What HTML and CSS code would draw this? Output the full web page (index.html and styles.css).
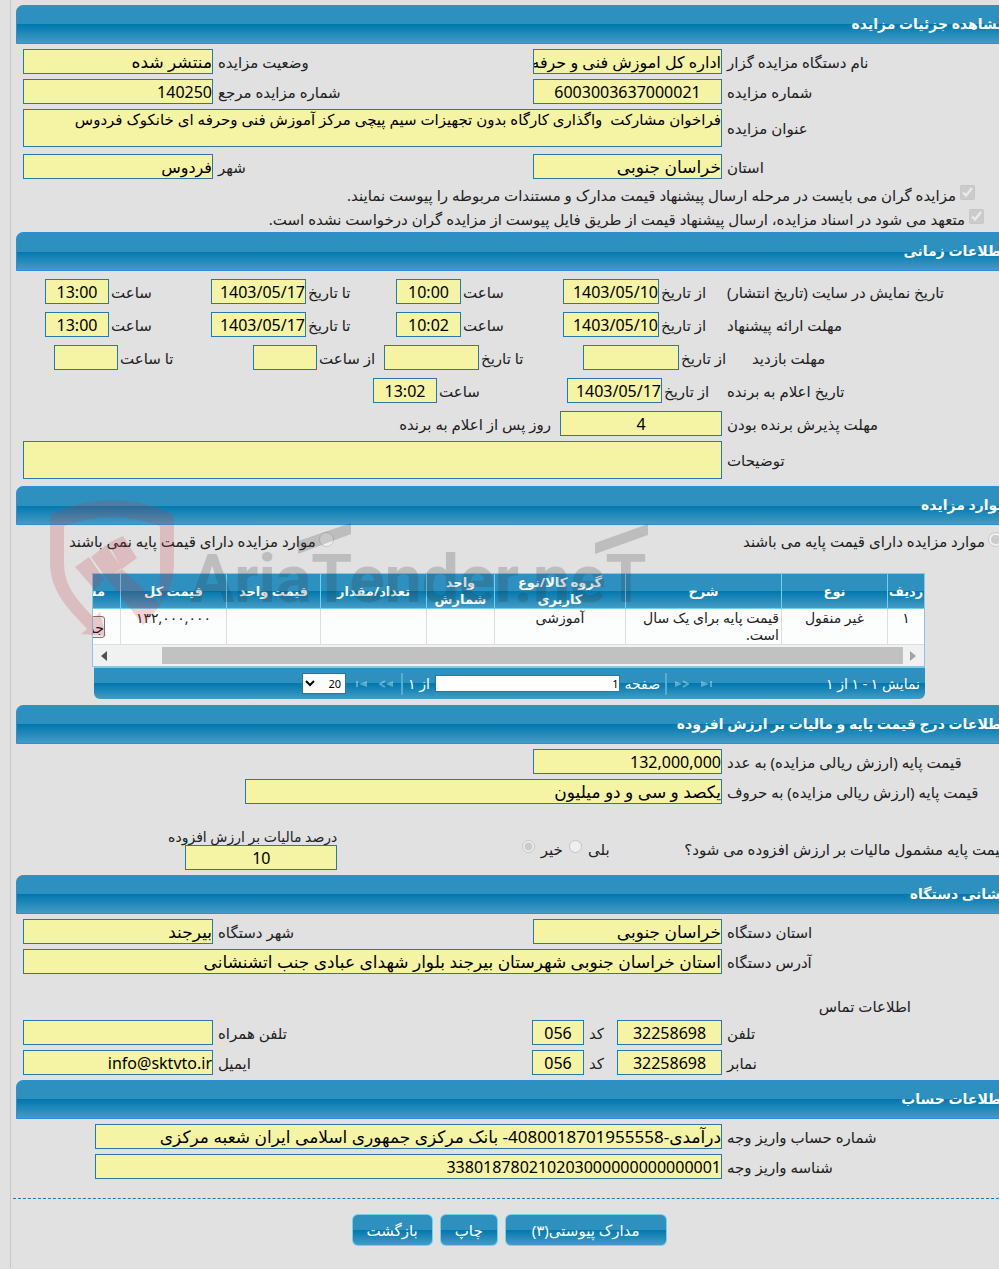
FILE: index.html
```
<!DOCTYPE html>
<html lang="fa" dir="rtl">
<head>
  <meta charset="UTF-8" />
  <meta name="viewport" content="width=device-width, initial-scale=1.0" />
  <title>مشاهده جزئیات مزایده</title>
  <link rel="stylesheet" href="styles.css">
</head>
<body>
  <main class="page">
    <h2 class="bar">مشاهده جزئیات مزایده</h2>
    <section class="section general">
      <div class="row two">
        <label for="org">نام دستگاه مزایده گزار</label>
        <input type="text" id="org" value="اداره کل اموزش فنی و حرفه ای" readonly>
        <label for="status">وضعیت مزایده</label>
        <input type="text" id="status" class="fa" value="منتشر شده" readonly>
      </div>
      <div class="row two">
        <label for="num">شماره مزایده</label>
        <input type="text" id="num" class="center" value="6003003637000021" readonly>
        <label for="ref">شماره مزایده مرجع</label>
        <input type="text" id="ref" value="140250" readonly>
      </div>
      <div class="row wide">
        <label for="subject">عنوان مزایده</label>
        <textarea id="subject" readonly>فراخوان مشارکت  واگذاری کارگاه بدون تجهیزات سیم پیچی مرکز آموزش فنی وحرفه ای خانکوک فردوس</textarea>
      </div>
      <div class="row two province">
        <label for="province">استان</label>
        <input type="text" id="province" class="fa" value="خراسان جنوبی" readonly>
        <label for="city">شهر</label>
        <input type="text" id="city" value="فردوس" readonly>
      </div>
      <div class="checks">
        <label class="check first"><input type="checkbox" checked disabled> مزایده گران می بایست در مرحله ارسال پیشنهاد قیمت مدارک و مستندات مربوطه را پیوست نمایند.</label>
        <label class="check"><input type="checkbox" checked disabled> متعهد می شود در اسناد مزایده، ارسال پیشنهاد قیمت از طریق فایل پیوست از مزایده گران درخواست نشده است.</label>
      </div>
    </section>

    <h2 class="bar">اطلاعات زمانی</h2>
    <section class="section times">
      <div class="row time">
        <span>تاریخ نمایش در سایت (تاریخ انتشار)</span>
        <label for="d1">از تاریخ</label>
        <input type="text" id="d1" value="1403/05/10" readonly>
        <label for="h1">ساعت</label>
        <input type="text" id="h1" class="center" value="10:00" readonly>
        <label for="d2">تا تاریخ</label>
        <input type="text" id="d2" value="1403/05/17" readonly>
        <label for="h2">ساعت</label>
        <input type="text" id="h2" class="center" value="13:00" readonly>
      </div>
      <div class="row time">
        <span>مهلت ارائه پیشنهاد</span>
        <label for="d3">از تاریخ</label>
        <input type="text" id="d3" value="1403/05/10" readonly>
        <label for="h3">ساعت</label>
        <input type="text" id="h3" class="center" value="10:02" readonly>
        <label for="d4">تا تاریخ</label>
        <input type="text" id="d4" value="1403/05/17" readonly>
        <label for="h4">ساعت</label>
        <input type="text" id="h4" class="center" value="13:00" readonly>
      </div>
      <div class="row visit">
        <span>مهلت بازدید</span>
        <label for="d5">از تاریخ</label>
        <input type="text" id="d5" readonly>
        <label for="d6">تا تاریخ</label>
        <input type="text" id="d6" readonly>
        <label for="h5">از ساعت</label>
        <input type="text" id="h5" readonly>
        <label for="h6">تا ساعت</label>
        <input type="text" id="h6" readonly>
      </div>
      <div class="row winner">
        <span>تاریخ اعلام به برنده</span>
        <label for="d7">از تاریخ</label>
        <input type="text" id="d7" value="1403/05/17" readonly>
        <label for="h7">ساعت</label>
        <input type="text" id="h7" class="center" value="13:02" readonly>
      </div>
      <div class="row accept">
        <label for="days">مهلت پذیرش برنده بودن</label>
        <input type="text" id="days" class="center" value="4" readonly>
        <span class="after">روز پس از اعلام به برنده</span>
      </div>
      <div class="row wide">
        <label for="notes">توضیحات</label>
        <textarea id="notes" readonly></textarea>
      </div>
    </section>

    <h2 class="bar">موارد مزایده</h2>
    <section class="section items">
      <div class="base-price">
        <label><input type="radio" name="base" checked disabled> موارد مزایده دارای قیمت پایه می باشند</label>
        <label><input type="radio" name="base" disabled> موارد مزایده دارای قیمت پایه نمی باشند</label>
      </div>

      <div class="grid">
        <div class="grid-view">
          <table>
            <colgroup>
              <col class="c-row"><col class="c-kind"><col class="c-desc"><col class="c-group"><col class="c-unit">
              <col class="c-qty"><col class="c-each"><col class="c-total"><col class="c-more">
            </colgroup>
            <thead>
              <tr>
                <th>ردیف</th>
                <th>نوع</th>
                <th>شرح</th>
                <th>گروه کالا/نوع<br>کاربری</th>
                <th>واحد شمارش</th>
                <th>تعداد/مقدار</th>
                <th>قیمت واحد</th>
                <th>قیمت کل</th>
                <th class="more-col">مشخصات</th>
              </tr>
            </thead>
            <tbody>
              <tr>
                <td>۱</td>
                <td>غیر منقول</td>
                <td class="desc">قیمت پایه برای یک سال است.</td>
                <td>آموزشی</td>
                <td></td>
                <td></td>
                <td></td>
                <td>۱۳۲,۰۰۰,۰۰۰</td>
                <td class="more-col"><button type="button" class="more">جزئیات</button></td>
              </tr>
            </tbody>
          </table>
          <div class="scroll">
            <svg class="off" width="6" height="10" viewBox="0 0 6 10"><path d="M0 0L6 5L0 10Z"/></svg>
            <div class="thumb"></div>
            <svg width="6" height="10" viewBox="0 0 6 10"><path d="M6 0L0 5L6 10Z"/></svg>
          </div>
        </div>
        <div class="pager">
          <span class="info">نمایش ۱ - ۱ از ۱</span>
          <div class="pager-nav">
            <button type="button" disabled aria-label="اولین"><svg width="12" height="8" viewBox="0 0 12 8"><path d="M0 1L8 4L0 7ZM9 1H11V7H9Z"/></svg></button>
            <button type="button" disabled aria-label="قبلی"><svg width="14" height="8" viewBox="0 0 14 8"><path d="M0 1L7 4L0 7Z"/><path class="line" d="M8 1L13 4L8 7"/></svg></button>
            <i></i>
            <label for="pg">صفحه</label>
            <input type="text" id="pg" value="1">
            <span>از ۱</span>
            <i></i>
            <button type="button" disabled aria-label="بعدی"><svg width="14" height="8" viewBox="0 0 14 8"><path d="M14 1L7 4L14 7Z"/><path class="line" d="M6 1L1 4L6 7"/></svg></button>
            <button type="button" disabled aria-label="آخرین"><svg width="12" height="8" viewBox="0 0 12 8"><path d="M12 1L4 4L12 7ZM1 1H3V7H1Z"/></svg></button>
            <select aria-label="تعداد در صفحه"><option>20</option></select>
          </div>
        </div>
      </div>

      <svg class="watermark" width="610" height="140" viewBox="0 0 610 140" direction="ltr">
        <g fill="#c8323c">
          <path d="M0 15Q62 -15 124 15V62C124 88 112 104 93 125L111 105C108 92 110 80 110 70V26Q62 8 14 26V62C14 88 28 100 44 118L50 112L56 136L31 134L37 129C18 108 0 92 0 62Z"/>
          <path d="M25 67L39 57L54 79L45 90ZM41 57L56 45L72 68L57 79ZM58 43L73 36L87 58L72 69Z"/>
          <path d="M57 79L72 69L111 105L93 125Z"/>
        </g>
        <g fill="#333">
          <path d="M248 41L301 23V34L248 54ZM545 43L598 24V35L545 54Z"/>
          <text x="140" y="102">AriaTender.neT</text>
        </g>
      </svg>
    </section>

    <h2 class="bar">اطلاعات درج قیمت پایه و مالیات بر ارزش افزوده</h2>
    <section class="section">
      <div class="row two">
        <label for="price">قیمت پایه (ارزش ریالی مزایده) به عدد</label>
        <input type="text" id="price" value="132,000,000" readonly>
      </div>
      <div class="row words">
        <label for="words">قیمت پایه (ارزش ریالی مزایده) به حروف</label>
        <input type="text" id="words" class="fa" value="یکصد و سی و دو میلیون" readonly>
      </div>
      <div class="vat">
        <span class="question">قیمت پایه مشمول مالیات بر ارزش افزوده می شود؟</span>
        <div class="answers">
          <label for="yes">بلی</label>
          <input type="radio" id="yes" name="vat" disabled>
          <label for="no">خیر</label>
          <input type="radio" id="no" name="vat" checked disabled>
        </div>
        <div class="percent">
          <label for="vat">درصد مالیات بر ارزش افزوده</label>
          <input type="text" id="vat" class="center" value="10" readonly>
        </div>
      </div>
    </section>

    <h2 class="bar">نشانی دستگاه</h2>
    <section class="section">
      <div class="row two">
        <label for="province2">استان دستگاه</label>
        <input type="text" id="province2" class="fa" value="خراسان جنوبی" readonly>
        <label for="city2">شهر دستگاه</label>
        <input type="text" id="city2" class="fa" value="بیرجند" readonly>
      </div>
      <div class="row wide">
        <label for="address">آدرس دستگاه</label>
        <input type="text" id="address" class="fa" value="استان خراسان جنوبی شهرستان بیرجند بلوار شهدای عبادی جنب اتشنشانی" readonly>
      </div>
      <h3 class="contact-title">اطلاعات تماس</h3>
      <div class="row contact">
        <label for="tel">تلفن</label>
        <input type="text" id="tel" class="center" value="32258698" readonly>
        <label for="telcode">کد</label>
        <input type="text" id="telcode" class="center" value="056" readonly>
        <label for="mobile">تلفن همراه</label>
        <input type="text" id="mobile" readonly>
      </div>
      <div class="row contact">
        <label for="fax">نمابر</label>
        <input type="text" id="fax" class="center" value="32258698" readonly>
        <label for="faxcode">کد</label>
        <input type="text" id="faxcode" class="center" value="056" readonly>
        <label for="email">ایمیل</label>
        <input type="text" id="email" value="info@sktvto.ir" readonly>
      </div>
    </section>

    <h2 class="bar">اطلاعات حساب</h2>
    <section class="section">
      <div class="row account">
        <label for="account">شماره حساب واریز وجه</label>
        <input type="text" id="account" class="fa" value="درآمدی-4080018701955558- بانک مرکزی جمهوری اسلامی ایران شعبه مرکزی" readonly>
      </div>
      <div class="row account">
        <label for="payid">شناسه واریز وجه</label>
        <input type="text" id="payid" value="338018780210203000000000000001" readonly>
      </div>
    </section>

    <div class="actions">
      <button type="button" class="docs">مدارک پیوستی(۳)</button>
      <button type="button">چاپ</button>
      <button type="button">بازگشت</button>
    </div>
  </main>
</body>
</html>
```
FILE: styles.css
```
:root {
  --bg: #e1e1e1;
  --field: #f5f3a4;
  --border: #2779aa;
  --bar: linear-gradient(#2e90bf 0, #2e90bf 50%, #0078ae 50%, #459bc5 100%);
}

* {
  box-sizing: border-box;
  margin: 0;
  padding: 0;
}

body {
  font-family: "Noto Sans", "DejaVu Sans", sans-serif;
  font-size: 15px;
  line-height: 18px;
  background: var(--bg);
  color: #222;
  overflow-x: hidden;
}

.page {
  margin-left: 10px;
  padding: 5px 0 22px 5px;
  border-left: 1px solid #c8c8c8;
}

.bar {
  height: 39px;
  line-height: 36px;
  margin-right: -8px;
  border: 1px solid #2a90dd;
  border-top-left-radius: 7px;
  background: var(--bar);
  color: #fff;
  font-size: 14px;
  font-weight: bold;
}

.section {
  display: flex;
  flex-direction: column;
  gap: 5px;
  padding: 5px 0 5px 7px;
}

.general {
  padding-bottom: 0;
}

.row {
  display: grid;
  gap: 5px;
  align-items: center;
}

.row label,
.row span {
  text-align: left;
  white-space: nowrap;
}

.two { grid-template-columns: 272fr 189px 310fr 190px; }
.wide { grid-template-columns: 272fr 699fr; }
.words { grid-template-columns: 272fr 477fr 217fr; }
.account { grid-template-columns: 272fr 627fr 67fr; }
.contact { grid-template-columns: 272fr 105px 23px 52px 309fr 190px; }
.time { grid-template-columns: 272fr 64fr 96px 98fr 65px 86fr 95px 98fr 64px 20fr; gap: 2px; }
.visit { grid-template-columns: 247fr 69fr 96px 100fr 95px 63fr 64px 131fr 64px 29fr; gap: 2px; }
.winner { grid-template-columns: 272fr 61fr 95px 126fr 64px 348fr; gap: 2px; }
.accept { grid-template-columns: 272fr 162px 532fr; }

.row .after {
  text-align: right;
  padding-right: 4px;
}

input[type="text"],
textarea {
  width: 100%;
  height: 25px;
  border: 1px solid var(--border);
  background: var(--field);
  color: #000;
  font-family: inherit;
  font-size: 16px;
  border-radius: 0;
  outline: none;
}

input.fa {
  font-size: 17px;
}

textarea {
  display: block;
  height: 38px;
  font-size: 15px;
  line-height: 18px;
  resize: none;
  overflow: hidden;
}

input.center {
  text-align: center;
}

.province {
  margin-top: 2px;
}

.checks {
  padding-right: 15px;
}

.check {
  display: flex;
  align-items: center;
  gap: 4px;
  height: 24px;
  padding-bottom: 2px;
  white-space: nowrap;
}

.check.first {
  padding-right: 9px;
}

input[type="checkbox"] {
  width: 15px;
  height: 15px;
  margin-bottom: 6px;
}

/* dates and hours */
.times {
  gap: 8px;
  padding-top: 8px;
  padding-bottom: 7px;
}

.accept {
  margin-bottom: -3px;
}

/* auction items */
.items {
  position: relative;
  gap: 21px;
  padding-bottom: 6px;
}

.base-price {
  display: flex;
  justify-content: space-between;
  margin: 0 -4px 0 46px;
}

.base-price label {
  display: flex;
  align-items: center;
  gap: 3px;
  height: 22px;
}

input[type="radio"] {
  width: 15px;
  height: 15px;
  margin-bottom: 4px;
}

.grid {
  margin: 0 74px 0 69px;
}

.grid-view {
  overflow: hidden;
  border: 1px solid #8cc5e3;
}

table {
  width: 900px;
  table-layout: fixed;
  border-collapse: separate;
  border-spacing: 0;
  font-size: 14px;
  line-height: 17px;
}

.c-row { width: 37px; }
.c-kind { width: 106px; }
.c-desc { width: 156px; }
.c-group { width: 131px; }
.c-unit { width: 68px; }
.c-qty { width: 106px; }
.c-each { width: 94px; }
.c-total { width: 106px; }
.c-more { width: 96px; }

th {
  height: 35px;
  background: var(--bar);
  border-left: 1px solid #70d1f5;
  border-bottom: 1px solid #70d1f5;
  color: #fff;
  font-size: 13px;
}

td {
  height: 36px;
  background: #fcfdfd;
  border-left: 1px solid #ddd;
  border-bottom: 1px solid #ddd;
  text-align: center;
  vertical-align: top;
}

td.desc {
  text-align: right;
  padding-right: 2px;
}

.more-col {
  text-align: right;
  padding-right: 15px;
}

.more {
  height: 22px;
  width: 64px;
  margin-top: 7px;
  border: 1px solid #767676;
  border-radius: 3px;
  background: #efefef;
  font-family: inherit;
  font-size: 14px;
  text-align: right;
}

.scroll {
  display: flex;
  align-items: center;
  height: 21px;
  padding: 0 8px;
  background: #f1f1f1;
  fill: #505050;
}

.scroll .off {
  fill: #a3a3a3;
}

.thumb {
  flex: 1;
  height: 17px;
  margin: 0 7px 0 55px;
  background: #c1c1c1;
}

.pager {
  display: flex;
  align-items: center;
  height: 32px;
  margin-left: 2px;
  padding: 0 5px;
  background: var(--bar);
  border-top: 1px solid #70d1f5;
  border-radius: 0 0 6px 6px;
  color: #fff;
  font-size: 14px;
}

.pager-nav {
  flex: 1;
  display: flex;
  align-items: center;
  gap: 5px;
  margin: 0 109px 0 203px;
}

.pager-nav button {
  width: 20px;
  border: none;
  background: none;
  line-height: 0;
}

.pager-nav svg {
  fill: #fff;
  opacity: 0.35;
}

.pager-nav .line {
  fill: none;
  stroke: #fff;
  stroke-width: 2;
}

.pager-nav i {
  width: 2px;
  height: 22px;
  background: #5aabd2;
}

.pager-nav input[type="text"] {
  flex: 1;
  min-width: 40px;
  height: 17px;
  background: #fff;
  font-size: 11px;
}

.pager-nav select {
  width: 44px;
  height: 21px;
  border: 1px solid var(--border);
  background: #fff;
  font-family: inherit;
  font-size: 11px;
}

.watermark {
  position: absolute;
  left: 34px;
  top: -25px;
  opacity: 0.2;
  direction: ltr;
  pointer-events: none;
}

.watermark text {
  font-family: Roboto, sans-serif;
  font-size: 66px;
  font-weight: bold;
}

/* tax */
.vat {
  display: grid;
  grid-template-columns: 313fr 75fr 88px 185fr 152px 163fr;
  height: 61px;
  align-items: end;
}

.question {
  margin: 0 -8px 12px 0;
  white-space: nowrap;
}

.answers {
  grid-column: 3;
  display: flex;
  align-items: center;
  gap: 6px;
  margin-bottom: 12px;
}

.percent {
  grid-column: 5;
}

.percent label {
  display: block;
  font-size: 14px;
  line-height: 16px;
  white-space: nowrap;
}

.percent input {
  display: block;
}

.contact-title {
  margin: 18px 88px 0 0;
  font-size: 15px;
  font-weight: normal;
  line-height: 18px;
}

/* footer buttons */
.actions {
  display: flex;
  justify-content: center;
  gap: 7px;
  margin: 14px 0 0 -3px;
  padding: 15px 0 0 6px;
  border-top: 1px dashed var(--border);
}

.actions button {
  height: 32px;
  padding: 0 14px;
  border: 1px solid #70d1f5;
  border-radius: 6px;
  background: var(--bar);
  color: #fff;
  font-family: inherit;
  font-size: 15px;
}

.actions .docs {
  padding: 0 26px;
}
```
